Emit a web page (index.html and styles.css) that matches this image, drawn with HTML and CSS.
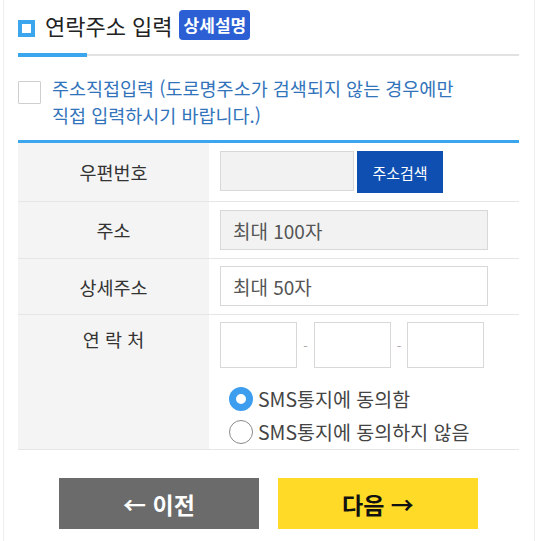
FILE: index.html
```html
<!DOCTYPE html>
<html lang="ko">
<head>
<meta charset="utf-8">
<link rel="stylesheet" href="styles.css">
</head>
<body>
<div class="wrap">
  <div class="header">
    <span class="sq"></span>
    <h2 class="title">연락주소 입력</h2>
    <span class="badge">상세설명</span>
  </div>
  <div class="rule"><span class="accent"></span><span class="line"></span></div>

  <div class="direct">
    <span class="cbox"></span>
    <p class="direct-text">주소직접입력 (도로명주소가 검색되지 않는 경우에만<br>직접 입력하시기 바랍니다.)</p>
  </div>

  <div class="table">
    <div class="row">
      <div class="label">우편번호</div>
      <div class="cell">
        <div class="postal-line">
          <span class="input gray postal"></span>
          <span class="search-btn">주소검색</span>
        </div>
      </div>
    </div>
    <div class="row">
      <div class="label">주소</div>
      <div class="cell"><span class="input gray wide">최대 100자</span></div>
    </div>
    <div class="row r3">
      <div class="label">상세주소</div>
      <div class="cell"><span class="input wide">최대 50자</span></div>
    </div>
    <div class="row r4">
      <div class="label top">연 락 처</div>
      <div class="cell">
        <div class="phone">
          <span class="input pbox"></span><span class="dash">-</span><span class="input pbox"></span><span class="dash">-</span><span class="input pbox"></span>
        </div>
        <div class="radios">
          <div class="radio-row"><span class="radio on"></span><span>SMS통지에 동의함</span></div>
          <div class="radio-row"><span class="radio"></span><span>SMS통지에 동의하지 않음</span></div>
        </div>
      </div>
    </div>
  </div>

  <div class="buttons">
    <span class="btn prev">← 이전</span>
    <span class="btn next">다음 →</span>
  </div>
</div>
</body>
</html>
```
FILE: styles.css
```css
* { box-sizing: border-box; }
html, body { margin: 0; padding: 0; background: #fff; }
body {
  font-family: "Noto Sans CJK KR", "Noto Sans", sans-serif;
  color: #333;
}
.wrap {
  margin: 0 10px 0 3px;
  border-left: 1px solid #f0f0f0;
  border-right: 1px solid #f0f0f0;
  padding: 0 15px 13px 14px;
  min-height: 541px;
}
.header {
  display: flex;
  align-items: center;
  height: 53px;
  padding-top: 10px;
  padding-bottom: 13px;
}
.sq {
  width: 17px;
  height: 17px;
  border: 4px solid #3ba5ee;
  margin-top: 6px;
  margin-right: 10px;
  flex: none;
}
.title {
  margin: 0;
  font-size: 22px;
  font-weight: 400;
  color: #222;
  line-height: 30px;
  margin-right: 6px;
}
.badge {
  background: #2c5fd4;
  color: #fff;
  font-size: 17px;
  font-weight: 700;
  height: 30px;
  line-height: 30px;
  padding: 0 4px 0 5px;
  border-radius: 4px;
}
.rule {
  display: flex;
  align-items: center;
  height: 4px;
}
.accent { width: 69px; height: 4px; background: #3ba5ee; }
.line { flex: 1; height: 2px; background: #e2e2e2; }

.direct {
  display: flex;
  align-items: flex-start;
  padding: 18px 0 11px;
}
.cbox {
  width: 23px;
  height: 23px;
  border: 1px solid #cfcfcf;
  margin-top: 6px;
  margin-right: 11px;
  flex: none;
  border-radius: 1px;
}
.direct-text {
  margin: 0;
  font-size: 18.5px;
  line-height: 27px;
  color: #3274bb;
  white-space: nowrap;
}

.table { border-top: 3px solid #3ba5ee; }
.row {
  display: grid;
  grid-template-columns: 191px 1fr;
  border-bottom: 1px solid #e6e6e6;
}
.label {
  background: #f4f4f4;
  display: flex;
  align-items: center;
  justify-content: center;
  font-size: 18.5px;
  color: #333;
}
.label.top { align-items: flex-start; padding-top: 11px; }
.cell { padding: 8px 11px 8px; }
.r3 .cell { padding: 7px 11px 8px; }
.r4 .cell { padding: 7px 11px 1px; }
.postal-line { display: flex; align-items: flex-start; }
.input {
  display: flex;
  align-items: center;
  height: 40px;
  border: 1px solid #d8d8d8;
  background: #fff;
  padding-left: 12px;
  font-size: 19px;
  color: #555;
}
.input.gray { background: #f2f2f2; }
.postal { width: 134px; }
.search-btn {
  margin-left: 3px;
  width: 86px;
  height: 42px;
  background: #0e4fb1;
  color: #fff;
  font-size: 15px;
  display: flex;
  align-items: center;
  justify-content: center;
}
.wide { width: 268px; }
.phone { display: flex; align-items: center; }
.pbox { width: 77px; height: 46px; }
.dash {
  width: 17px;
  text-align: center;
  color: #aaa;
  font-size: 13px;
}
.dash:nth-of-type(4) { width: 16px; }
.radios { margin-top: 14px; padding-left: 9px; }
.radio-row {
  display: flex;
  align-items: center;
  height: 33px;
  font-size: 19.5px;
  color: #444;
  white-space: nowrap;
}
.radio {
  width: 24px;
  height: 24px;
  border-radius: 50%;
  border: 1px solid #8a8a8a;
  margin-right: 5px;
  flex: none;
  background: #fff;
}
.radio.on {
  border: 7px solid #3d9ef0;
}
.buttons {
  display: flex;
  justify-content: center;
  gap: 19px;
  margin-top: 28px;
}
.btn {
  width: 200px;
  height: 51px;
  display: flex;
  align-items: center;
  justify-content: center;
  font-size: 23px;
  font-weight: 700;
}
.prev { background: #6b6b6b; color: #fff; }
.next { background: #ffdb28; color: #111; }
```
